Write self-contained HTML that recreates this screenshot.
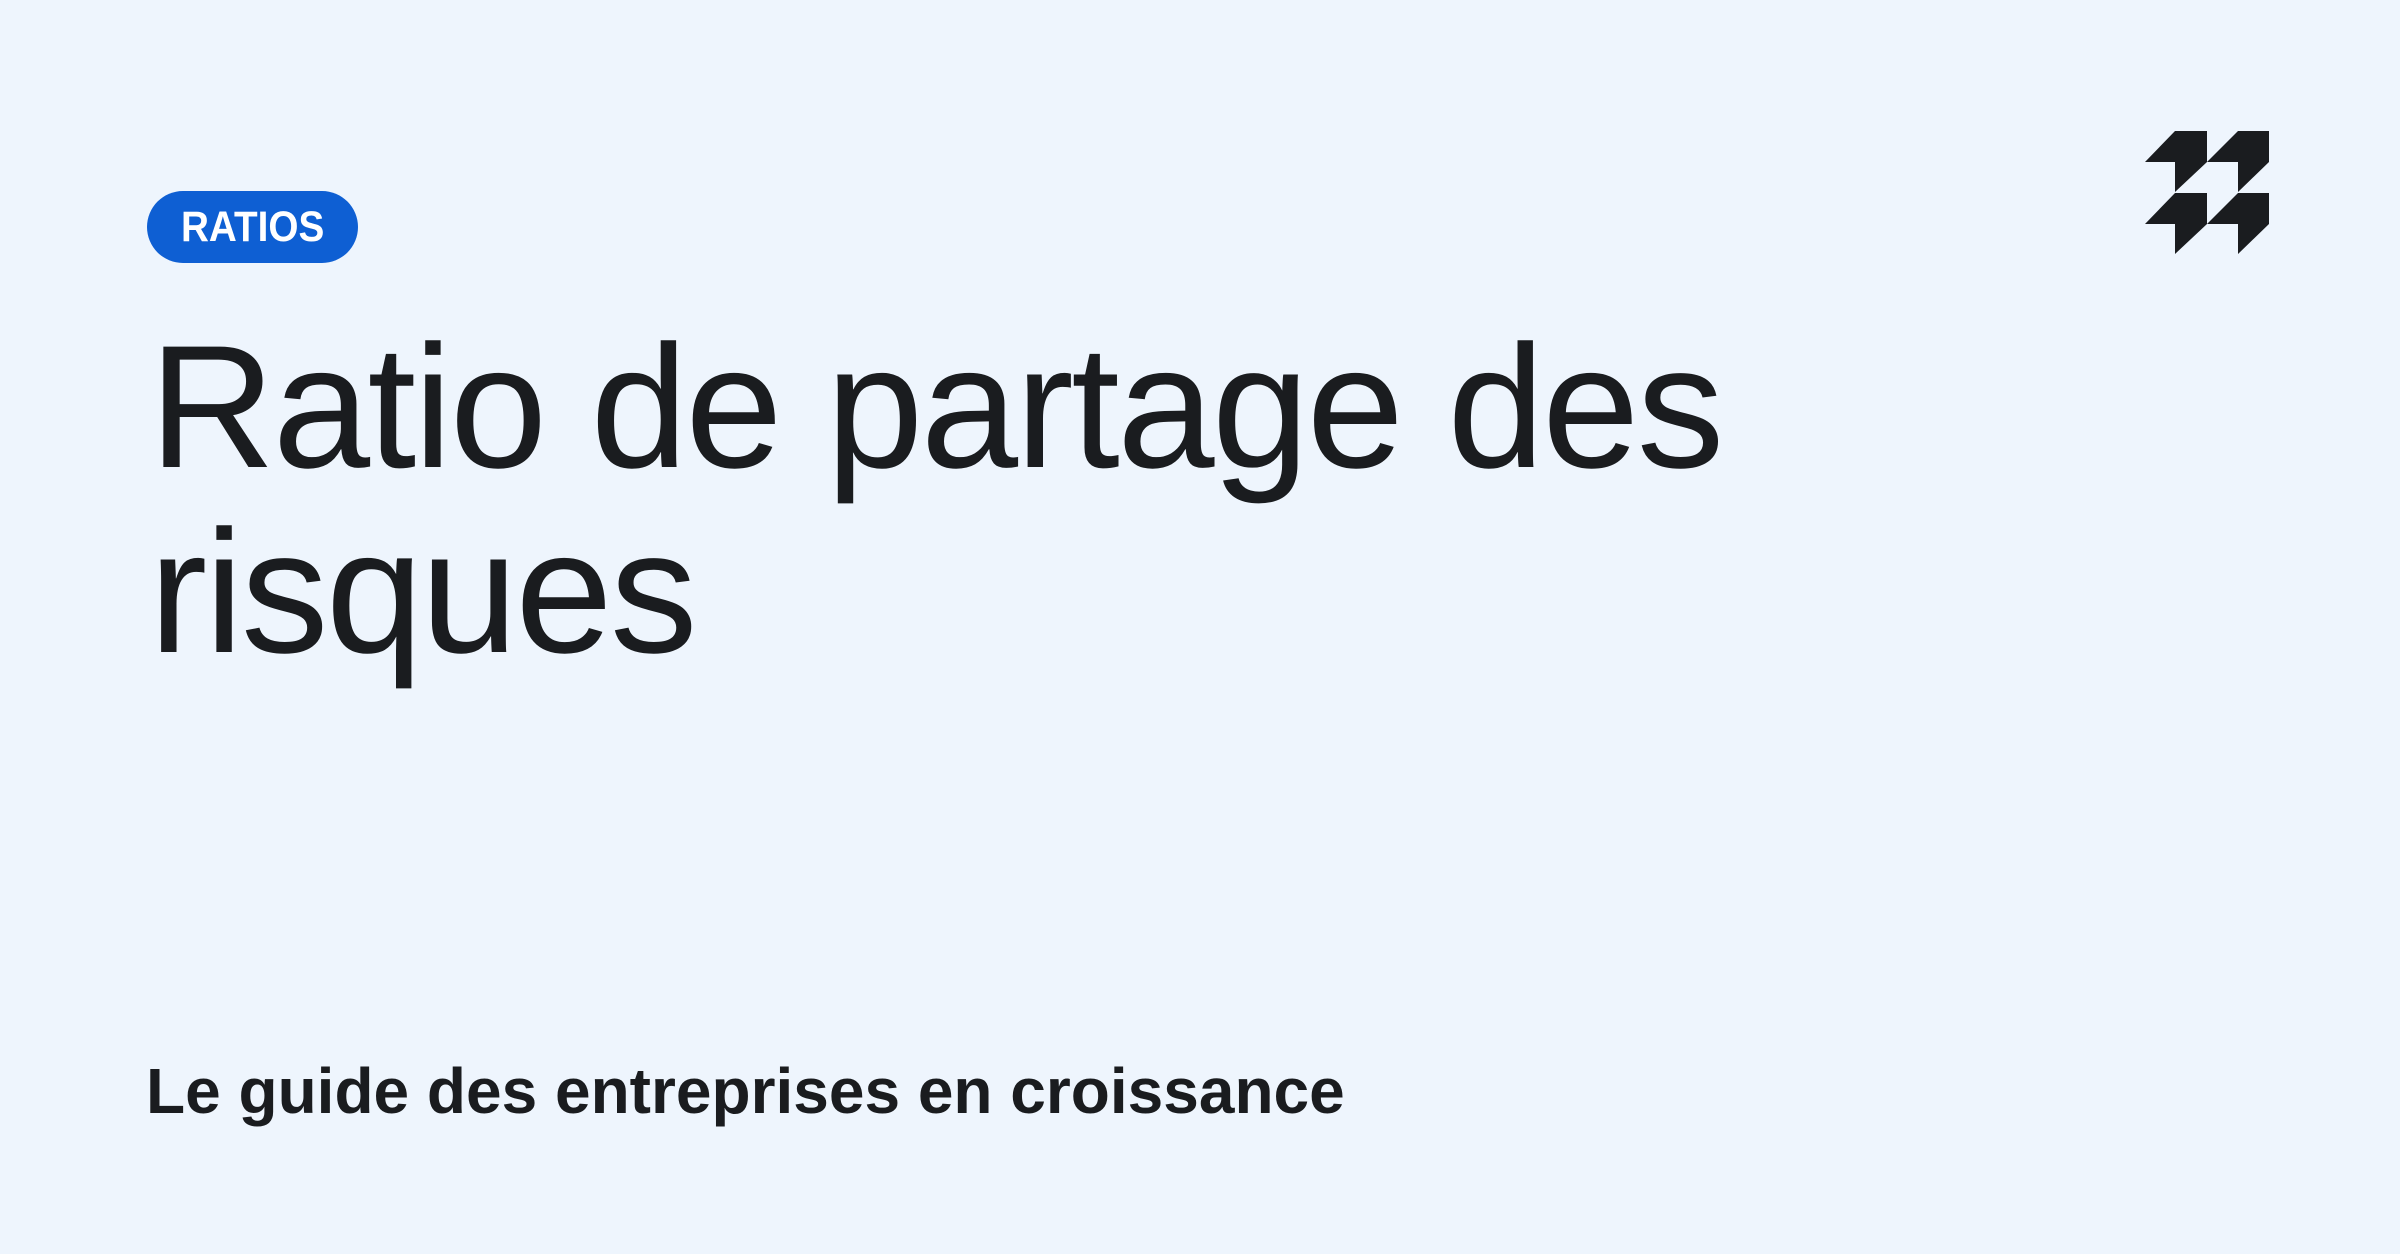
<!DOCTYPE html>
<html><head><meta charset="utf-8"><style>
html,body{margin:0;padding:0}
body{width:2400px;height:1254px;background:#EEF5FD;position:relative;overflow:hidden;font-family:"Liberation Sans",sans-serif;color:#1A1C1F}
.badge{position:absolute;left:147px;top:191px;width:211px;height:72px;border-radius:36px;background:#0E5FD3;color:#fff;font-size:43px;font-weight:bold;line-height:72px;text-align:center}
.badge span{display:inline-block;transform:scaleX(0.9)}
.title{position:absolute;left:149px;top:315px;font-size:175px;line-height:185px;letter-spacing:-2.6px;white-space:nowrap}
.sub{position:absolute;left:146px;top:1051px;font-size:64px;font-weight:bold;line-height:80px;white-space:nowrap}
svg{position:absolute;left:0;top:0}
</style></head><body>
<div class="badge"><span>RATIOS</span></div>
<div class="title">Ratio de partage des<br>risques</div>
<div class="sub">Le guide des entreprises en croissance</div>
<svg width="2400" height="1254"><g fill="#1A1C1F">
<polygon points="2175,131 2207,131 2207,162 2175,192 2175,162 2145,162"/>
<polygon points="2238,131 2269,131 2269,162 2238,192 2238,162 2207,162"/>
<polygon points="2175,193 2207,193 2207,224 2175,254 2175,224 2145,224"/>
<polygon points="2238,193 2269,193 2269,224 2238,254 2238,224 2207,224"/>
</g></svg>
</body></html>
